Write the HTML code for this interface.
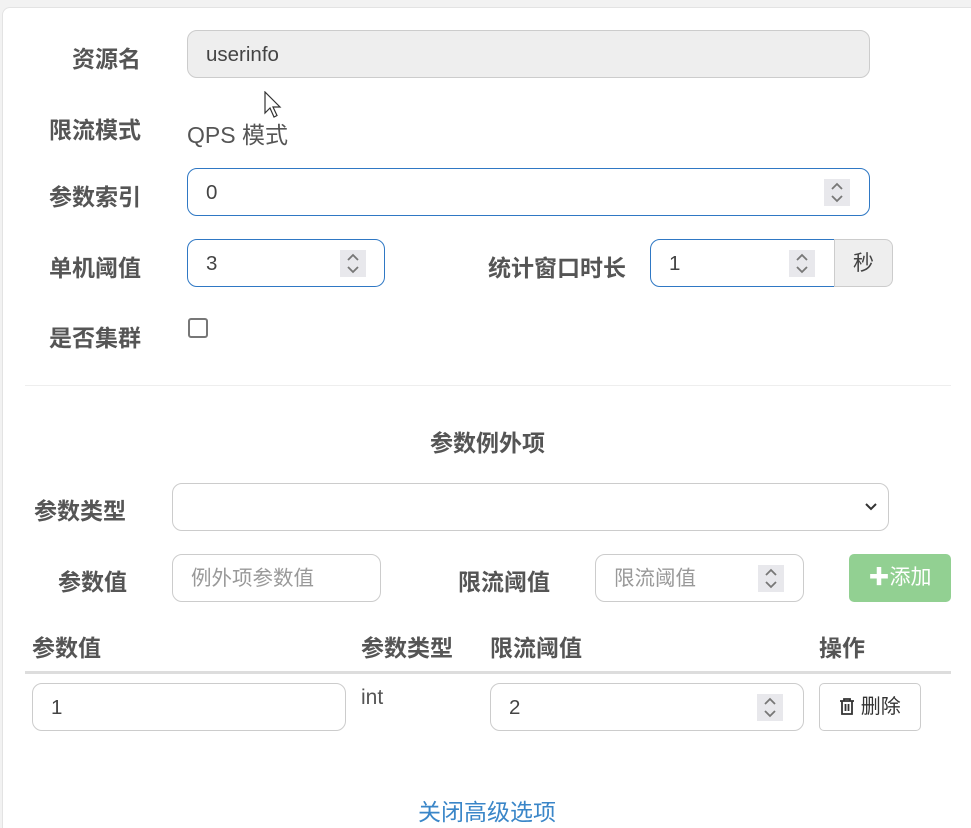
<!DOCTYPE html>
<html><head><meta charset="utf-8"><style>
html,body{margin:0;width:971px;height:828px;overflow:hidden}
body{background:#f2f2f2;font-family:"Liberation Sans","Noto Sans CJK SC",sans-serif;color:#555;position:relative}
.card{position:absolute;left:2px;top:7px;width:980px;height:830px;background:#fff;border:1px solid #e3e3e3;border-radius:8px}
.a{position:absolute}
.lbl{position:absolute;font-weight:bold;font-size:23px;color:#555;white-space:nowrap;line-height:26px}
.inp{position:absolute;box-sizing:border-box;border:1px solid #ccc;border-radius:10px;height:48px;font-size:20.5px;line-height:48px;padding-left:18px;color:#444;background:#fff}
.foc{border-color:#2f78c4}
.sp{position:absolute;top:10px;width:26px;height:27px;background:#e8e8ec;}
.sp svg{display:block}
</style></head><body>
<div class="card"></div>
<div class="lbl" style="left:72px;top:46px">资源名</div>
<div class="inp" style="left:187px;top:30px;width:683px;background:#eee;">userinfo</div>
<svg class="a" style="left:264px;top:91px" width="22" height="30" viewBox="0 0 22 30"><path d="M1 1 L1 22 L6 17 L10 26 L13 24.5 L9 16 L16 16 Z" fill="#fff" stroke="#333" stroke-width="1.2"/></svg>
<div class="lbl" style="left:49px;top:117px">限流模式</div>
<div class="a" style="left:187px;top:116px;font-size:23px;color:#555">QPS 模式</div>
<div class="lbl" style="left:49px;top:184px">参数索引</div>
<div class="inp foc" style="left:187px;top:168px;width:683px">0<div class="sp" style="left:636px"><svg width="26" height="27"><path d="M8 10 L13 5 L18 10 M8 17 L13 22 L18 17" fill="none" stroke="#777" stroke-width="1.8"/></svg></div></div>
<div class="lbl" style="left:49px;top:255px">单机阈值</div>
<div class="inp foc" style="left:187px;top:239px;width:198px">3<div class="sp" style="left:152px"><svg width="26" height="27"><path d="M8 10 L13 5 L18 10 M8 17 L13 22 L18 17" fill="none" stroke="#777" stroke-width="1.8"/></svg></div></div>
<div class="lbl" style="left:488px;top:255px">统计窗口时长</div>
<div class="inp foc" style="left:650px;top:239px;width:185px;border-radius:10px 0 0 10px">1<div class="sp" style="left:138px"><svg width="26" height="27"><path d="M8 10 L13 5 L18 10 M8 17 L13 22 L18 17" fill="none" stroke="#777" stroke-width="1.8"/></svg></div></div>
<div class="inp" style="left:834px;top:239px;width:59px;background:#eee;border-radius:0 8px 8px 0;padding-left:18px;font-size:21px">秒</div>
<div class="lbl" style="left:49px;top:325px">是否集群</div>
<div class="a" style="left:188px;top:318px;width:16px;height:16px;border:2px solid #777;border-radius:3px"></div>
<div class="a" style="left:25px;top:385px;width:926px;height:1px;background:#eee"></div>
<div class="lbl" style="left:430px;top:430px">参数例外项</div>
<div class="lbl" style="left:34px;top:498px">参数类型</div>
<div class="inp" style="left:172px;top:483px;width:717px"><svg class="a" style="right:10px;top:18px" width="14" height="10"><path d="M2 2 L7 7 L12 2" fill="none" stroke="#333" stroke-width="2"/></svg></div>
<div class="lbl" style="left:58px;top:569px">参数值</div>
<div class="inp" style="left:172px;top:554px;width:209px;color:#999">例外项参数值</div>
<div class="lbl" style="left:458px;top:569px">限流阈值</div>
<div class="inp" style="left:595px;top:554px;width:209px;color:#999">限流阈值<div class="sp" style="left:162px"><svg width="26" height="27"><path d="M8 10 L13 5 L18 10 M8 17 L13 22 L18 17" fill="none" stroke="#777" stroke-width="1.8"/></svg></div></div>
<div class="a" style="left:849px;top:554px;width:102px;height:48px;background:#92d092;border-radius:5px;color:#fff;font-size:21px;line-height:48px;text-align:center"><b style="font-size:21px">✚</b>添加</div>
<div class="lbl" style="left:32px;top:635px">参数值</div>
<div class="lbl" style="left:361px;top:635px">参数类型</div>
<div class="lbl" style="left:490px;top:635px">限流阈值</div>
<div class="lbl" style="left:819px;top:635px">操作</div>
<div class="a" style="left:25px;top:671px;width:926px;height:3px;background:#ddd"></div>
<div class="inp" style="left:32px;top:683px;width:314px">1</div>
<div class="a" style="left:361px;top:686px;font-size:21px;color:#555">int</div>
<div class="inp" style="left:490px;top:683px;width:314px">2<div class="sp" style="left:266px"><svg width="26" height="27"><path d="M8 10 L13 5 L18 10 M8 17 L13 22 L18 17" fill="none" stroke="#777" stroke-width="1.8"/></svg></div></div>
<div class="a" style="left:819px;top:683px;width:100px;height:46px;border:1px solid #ccc;border-radius:5px;font-size:20px;line-height:46px;color:#333;text-align:center"><svg style="vertical-align:-3px" width="16" height="19" viewBox="0 0 16 19"><path d="M1 4 H15 M5 4 V2 H11 V4 M3 4 V17 H13 V4 M6.5 7 V14 M9.5 7 V14" fill="none" stroke="#333" stroke-width="1.8"/></svg> 删除</div>
<div class="a" style="left:418px;top:793px;font-size:23px;color:#3a86c8">关闭高级选项</div>
</body></html>
